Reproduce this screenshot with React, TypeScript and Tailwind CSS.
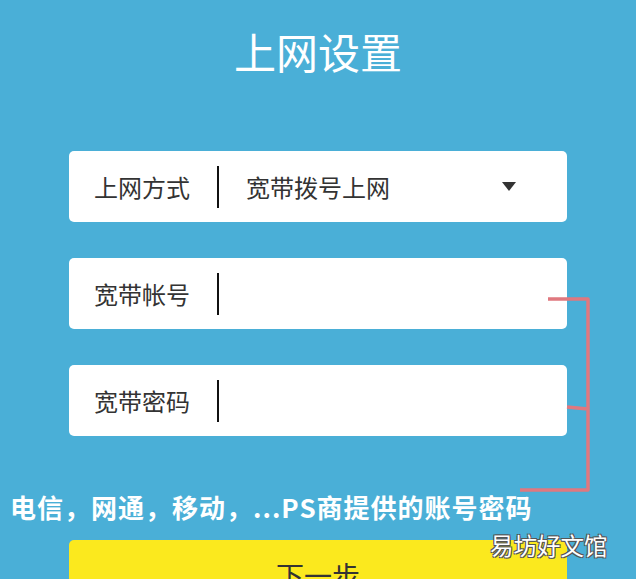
const fields = [
  { label: "上网方式", value: "宽带拨号上网", select: true },
  { label: "宽带帐号", value: "", select: false },
  { label: "宽带密码", value: "", select: false },
];

function Field({ label, value, select }: { label: string; value: string; select: boolean }) {
  return (
    <div className="flex h-[71px] items-center rounded-[5px] bg-white">
      <span className="w-[148px] pl-[25px] text-[24px] leading-none text-[#333]">{label}</span>
      <span className="h-[42px] w-[2px] bg-[#111]" />
      <span className="flex-1 pl-[27px] text-[24px] leading-none text-[#333]">{value}</span>
      {select && (
        <svg width="14" height="9" viewBox="0 0 14 9" className="mr-[51px]">
          <path d="M0 0 H14 L7 9 Z" fill="#333" />
        </svg>
      )}
    </div>
  );
}

export default function App() {
  return (
    <div
      className="relative h-[579px] w-[636px] overflow-hidden bg-[#4aafd7]"
      style={{ fontFamily: '"Noto Sans CJK SC", "Noto Sans", sans-serif' }}
    >
      <h1 className="pt-[30px] text-center text-[42px] leading-none font-normal text-white">上网设置</h1>

      <div className="mx-auto mt-[79px] flex w-[498px] flex-col gap-[36px]">
        {fields.map((f) => (
          <Field key={f.label} {...f} />
        ))}
      </div>

      <p className="mt-[58px] pl-[10px] text-[26px] leading-none font-bold tracking-[1px] text-white">
        电信，网通，移动，...PS商提供的账号密码
      </p>

      <div className="mx-auto mt-[20px] h-[60px] w-[498px] rounded-[5px] bg-[#fbe91e] pt-[21px] text-center text-[28px] leading-none text-[#333]">
        下一步
      </div>

      {/* red bracket annotation */}
      <svg className="absolute top-0 left-0" width="636" height="579" viewBox="0 0 636 579">
        <path
          d="M548 299 H588 V490 H520 M567 407 L588 409"
          fill="none"
          stroke="#e0787f"
          strokeWidth="3.5"
          strokeLinejoin="round"
        />
      </svg>

      <span className="absolute top-[534px] left-[490px] text-[23.5px] leading-none text-white [text-shadow:1px_1px_0_#555,-1px_-1px_0_#555,1px_-1px_0_#555,-1px_1px_0_#555]">
        易坊好文馆
      </span>
    </div>
  );
}
